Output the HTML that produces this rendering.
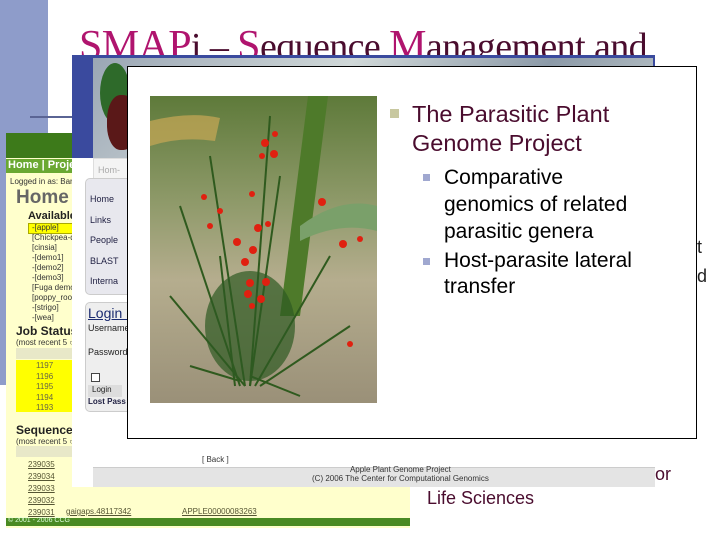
<!DOCTYPE html>
<html><head><meta charset="utf-8"><style>
*{margin:0;padding:0;box-sizing:border-box}
body{width:720px;height:540px;overflow:hidden;background:#fff;position:relative;font-family:"Liberation Sans",sans-serif}
.a{position:absolute}
.sm{font-size:8px;color:#333;white-space:nowrap}
</style></head><body>
<div class="a" style="left:0;top:0;width:48px;height:385px;background:#8e9cca"></div>
<div class="a" style="left:30px;top:116px;width:60px;height:2px;background:#5a6494"></div>
<div class="a" style="left:79px;top:22px;font-family:'Liberation Serif',serif;font-size:38px;color:#4a0c2e;white-space:nowrap;letter-spacing:-0.6px"><span style="color:#b0146e;font-size:42px">SMAP</span>i – <span style="color:#b0146e;font-size:42px">S</span>equence <span style="color:#b0146e;font-size:42px">M</span>anagement and</div>

<!-- green site -->
<div class="a" style="left:6px;top:133px;width:404px;height:395px;background:#ffffcc;overflow:hidden">
 <div class="a" style="left:0;top:0;width:404px;height:25px;background:#3d7a1a"></div>
 <div class="a" style="left:0;top:26px;width:404px;height:14px;background:#6aa832"></div>
 <div class="a" style="left:2px;top:26px;font-size:11px;font-weight:bold;color:#fff">Home | Projects</div>
 <div class="a sm" style="left:4px;top:44px">Logged in as: Barbara</div>
 <div class="a" style="left:10px;top:54px;font-size:19px;font-weight:bold;color:#666">Home</div>
 <div class="a" style="left:22px;top:77px;font-size:11px;font-weight:bold;color:#222">Available Pr</div>
 <div class="a" style="left:22px;top:90px;width:60px;height:11px;background:#ffff00;border:1px solid #aa0"></div>
 <div class="a sm" style="left:26px;top:90px;line-height:10px">-[apple]<br>[Chickpea-ds<br>[cinsia]<br>-[demo1]<br>-[demo2]<br>-[demo3]<br>[Fuga demo]<br>[poppy_roots<br>-[strigo]<br>-[wea]</div>
 <div class="a" style="left:10px;top:191px;font-size:12px;font-weight:bold;color:#222">Job Status:</div>
 <div class="a sm" style="left:10px;top:205px">(most recent 5 ○ p</div>
 <div class="a" style="left:10px;top:215px;width:200px;height:11px;background:#e8e8c8"></div>
 <div class="a" style="left:10px;top:227px;width:200px;height:52px;background:#ffff00"></div>
 <div class="a sm" style="left:30px;top:228px;line-height:10.5px;color:#664">1197<br>1196<br>1195<br>1194<br>1193</div>
 <div class="a" style="left:10px;top:290px;font-size:12px;font-weight:bold;color:#222">Sequences:</div>
 <div class="a sm" style="left:10px;top:304px">(most recent 5 ○ p</div>
 <div class="a" style="left:10px;top:313px;width:394px;height:11px;background:#e8e8c8"></div>
 <div class="a sm" style="left:22px;top:326px;line-height:12px;color:#553;text-decoration:underline">239035<br>239034<br>239033<br>239032<br>239031</div>
 <div class="a sm" style="left:60px;top:374px;color:#553;text-decoration:underline">gaigaps.48117342</div>
 <div class="a sm" style="left:176px;top:374px;color:#553;text-decoration:underline">APPLE00000083263</div>
 <div class="a" style="left:0;top:385px;width:404px;height:8px;background:#4a8a22"></div>
 <div class="a" style="left:2px;top:384px;font-size:7px;color:#dfd">© 2001 - 2006 CCG</div>
</div>

<!-- blue site -->
<div class="a" style="left:72px;top:55px;width:583px;height:432px;background:#f4f4f4;overflow:hidden">
 <div class="a" style="left:0;top:0;width:583px;height:103px;background:#3a4a9e"></div>
 <div class="a" style="left:21px;top:3px;width:560px;height:100px;background:linear-gradient(135deg,#9aa6b4,#d0d8d8 40%,#8c9aa8 70%,#c8d0d0)"></div>
 <div class="a" style="left:28px;top:8px;width:30px;height:60px;background:#2e6a2a;border-radius:50%"></div>
 <div class="a" style="left:35px;top:40px;width:30px;height:55px;background:#5a1818;border-radius:45%"></div>
 <div class="a" style="left:0;top:103px;width:583px;height:330px;background:#fff"></div>
 <div class="a" style="left:21px;top:103px;width:35px;height:22px;background:#f4f4f4;border:1px solid #ddd"></div>
 <div class="a" style="left:26px;top:110px;font-size:9px;color:#aaa">Hom-</div>
 <div class="a" style="left:13px;top:123px;width:50px;height:117px;background:#e8e8ee;border-radius:5px;border:1px solid #ccc"></div>
 <div class="a" style="left:18px;top:134px;font-size:9px;color:#224;line-height:20.5px">Home<br>Links<br>People<br>BLAST<br>Interna</div>
 <div class="a" style="left:13px;top:247px;width:60px;height:110px;background:#eee;border-radius:5px;border:1px solid #ccc"></div>
 <div class="a" style="left:16px;top:250px;font-size:14px;color:#1a2a70;text-decoration:underline">Login F</div>
 <div class="a" style="left:16px;top:268px;font-size:9px;color:#222">Username</div>
 <div class="a" style="left:16px;top:292px;font-size:9px;color:#222">Password</div>
 <div class="a" style="left:19px;top:318px;width:9px;height:9px;border:1px solid #444;background:#fff"></div>
 <div class="a" style="left:16px;top:330px;width:34px;height:12px;background:#ddd;font-size:8px;color:#222;padding-left:4px">Login</div>
 <div class="a" style="left:16px;top:342px;font-size:8px;font-weight:bold;color:#224">Lost Pass</div>
 <div class="a" style="left:130px;top:400px;font-size:8px;color:#333">[ Back ]</div>
 <div class="a" style="left:21px;top:412px;width:562px;height:20px;background:#e4e4e4;border-top:1px solid #ccc"></div>
 <div class="a" style="left:240px;top:410px;font-size:8px;color:#333;text-align:center;line-height:9px">Apple Plant Genome Project<br>(C) 2006 The Center for Computational Genomics</div>
</div>

<div class="a" style="left:655px;top:464px;font-size:18px;color:#4a0c2e">or</div>
<div class="a" style="left:427px;top:488px;font-size:18px;color:#4a0c2e">Life Sciences</div>
<div class="a" style="left:697px;top:237px;font-size:18px;color:#222">t</div>
<div class="a" style="left:697px;top:266px;font-size:18px;color:#222">d</div>

<!-- white box -->
<div class="a" style="left:127px;top:66px;width:570px;height:373px;background:#fff;border:1px solid #000"></div>

<svg class="a" style="left:150px;top:96px" width="227" height="307" viewBox="0 0 227 307">
 <defs><linearGradient id="g" x1="0" y1="0" x2="0" y2="1"><stop offset="0" stop-color="#5e7a3a"/><stop offset=".35" stop-color="#8f9a6a"/><stop offset=".6" stop-color="#b5ad8e"/><stop offset="1" stop-color="#9a9078"/></linearGradient></defs>
 <rect width="227" height="307" fill="url(#g)"/>
 <path d="M0 25 Q40 15 70 22 L65 45 Q30 40 0 50Z" fill="#c9a855" opacity=".7"/>
 <path d="M158 0 L178 0 L150 220 L130 220Z" fill="#4e7a2a"/>
 <path d="M150 130 Q190 100 227 110 L227 135 Q190 125 150 145Z" fill="#7aa06a"/>
 <g stroke="#2f5a1e" stroke-width="2" fill="none">
  <path d="M95 290 L60 60"/><path d="M100 290 L120 20"/><path d="M100 290 L130 80"/><path d="M90 290 L30 110"/><path d="M105 290 L180 160"/><path d="M95 290 L20 200"/><path d="M110 290 L200 230"/><path d="M100 280 L150 300"/><path d="M90 285 L40 270"/><path d="M85 290 L70 160"/>
 </g>
 <ellipse cx="100" cy="230" rx="45" ry="55" fill="#2e5a22" opacity=".7"/>
 <g fill="#e02010">
  <circle cx="115" cy="47" r="4"/><circle cx="124" cy="58" r="4"/><circle cx="112" cy="60" r="3"/><circle cx="125" cy="38" r="3"/>
  <circle cx="102" cy="98" r="3"/><circle cx="54" cy="101" r="3"/><circle cx="70" cy="115" r="3"/><circle cx="60" cy="130" r="3"/><circle cx="108" cy="132" r="4"/><circle cx="118" cy="128" r="3"/>
  <circle cx="87" cy="146" r="4"/><circle cx="103" cy="154" r="4"/><circle cx="95" cy="166" r="4"/><circle cx="100" cy="187" r="4"/><circle cx="116" cy="186" r="4"/><circle cx="98" cy="198" r="4"/><circle cx="111" cy="203" r="4"/><circle cx="102" cy="210" r="3"/>
  <circle cx="172" cy="106" r="4"/><circle cx="193" cy="148" r="4"/><circle cx="210" cy="143" r="3"/><circle cx="200" cy="248" r="3"/>
 </g>
</svg>

<div class="a" style="left:390px;top:109px;width:9px;height:9px;background:#c8c8a0"></div>
<div class="a" style="left:412px;top:100px;font-size:23.5px;line-height:29px;color:#4a0c2e;white-space:nowrap">The Parasitic Plant<br>Genome Project</div>
<div class="a" style="left:423px;top:174px;width:7px;height:7px;background:#a0a8d0"></div>
<div class="a" style="left:423px;top:258px;width:7px;height:7px;background:#a0a8d0"></div>
<div class="a" style="left:444px;top:164px;font-size:21px;line-height:27px;color:#000;white-space:nowrap">Comparative<br>genomics of related<br>parasitic genera</div>
<div class="a" style="left:444px;top:248px;font-size:21px;line-height:26px;color:#000;white-space:nowrap">Host-parasite lateral<br>transfer</div>
</body></html>
